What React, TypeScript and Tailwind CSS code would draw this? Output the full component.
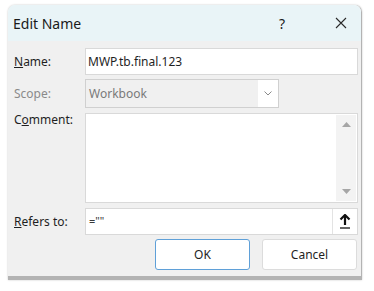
import React from "react";

const font = { fontFamily: '"Noto Sans", "Open Sans", sans-serif' };

const Row: React.FC<{ label: React.ReactNode; top?: boolean; muted?: boolean; children: React.ReactNode }> = ({
  label,
  top,
  muted,
  children,
}) => (
  <div className={`flex ${top ? "items-start" : "items-center"}`}>
    <div
      className={`w-[77px] shrink-0 pl-[6px] text-[12px] leading-[16px] ${top ? "-mt-[1px]" : ""} ${
        muted ? "text-[#8a8a8a]" : "text-[#1f1f1f]"
      }`}
    >
      {label}
    </div>
    {children}
  </div>
);

export default function App() {
  return (
    <div className="h-[291px] w-[374px] overflow-hidden bg-white pt-[5px] pl-[8px]" style={font}>
      <div className="w-[354px] rounded-t-[7px] border-b-[4px] border-r-[1px] border-[#b3b3b3] shadow-[0_0_2px_rgba(0,0,0,0.25)]">
        {/* title bar */}
        <div className="flex h-[36px] items-center rounded-t-[7px] bg-[#e9f4f7] pl-[5px] pr-[14px]">
          <span className="flex-1 text-[14px] text-[#1a1a1a]">Edit Name</span>
          <span className="mr-[50px] text-[14px] text-[#1a1a1a]">?</span>
          <svg width="12" height="12" viewBox="0 0 12 12" className="mb-[1px]">
            <path d="M1 1 L11 11 M11 1 L1 11" stroke="#2a2a2a" strokeWidth="1.1" fill="none" />
          </svg>
        </div>

        {/* body */}
        <div className="flex flex-col gap-[4px] bg-[#f0f0f0] pt-[7px] pr-[3px] pb-[6px]">
          <Row label={<><span className="underline">N</span>ame:</>}>
            <div className="flex h-[27px] w-[273px] items-center border border-[#d9d9d9] bg-white px-[2px] text-[12px] text-[#1f1f1f]">
              MWP.tb.final.123
            </div>
          </Row>

          <Row label="Scope:" muted>
            <div className="flex h-[29px] w-[194px] items-center border border-[#d0d0d0] bg-[#f0f0f0] pl-[3px] text-[12px] text-[#7a7a7a]">
              <span className="flex-1">Workbook</span>
              <div className="flex h-[27px] w-[20px] items-center justify-center bg-white">
                <svg width="8" height="5" viewBox="0 0 8 5">
                  <path d="M0.5 0.5 L4 4 L7.5 0.5" stroke="#8a8a8a" strokeWidth="1" fill="none" />
                </svg>
              </div>
            </div>
          </Row>

          <div className="mt-[1px]">
            <Row top label={<>C<span className="underline">o</span>mment:</>}>
              <div className="flex h-[90px] w-[273px] border border-[#d9d9d9] bg-white">
                <div className="flex-1" />
                <div className="my-[1px] mr-[1px] flex w-[20px] flex-col items-center justify-between bg-[#f3f3f3] py-[7px]">
                  <svg width="9" height="5" viewBox="0 0 9 5">
                    <path d="M0 5 L4.5 0 L9 5 Z" fill="#a6a6a6" />
                  </svg>
                  <svg width="9" height="5" viewBox="0 0 9 5">
                    <path d="M0 0 L4.5 5 L9 0 Z" fill="#a6a6a6" />
                  </svg>
                </div>
              </div>
            </Row>
          </div>

          <div className="mt-[1px]">
            <Row label={<><span className="underline">R</span>efers to:</>}>
              <div className="flex h-[27px] w-[273px] items-center border border-[#d9d9d9] bg-white pl-[3px] text-[11px] text-[#3a3a3a]">
                <span className="flex-1">=""</span>
                <div className="flex h-[25px] w-[25px] items-center justify-center border-l border-[#e3e3e3] bg-white">
                  <svg width="12" height="15" viewBox="0 0 12 15">
                    <path d="M6 1 L6 11" stroke="#111" strokeWidth="2.2" />
                    <path d="M1.5 5.5 L6 1 L10.5 5.5" stroke="#111" strokeWidth="2.2" fill="none" />
                    <path d="M1 14 L11 14" stroke="#111" strokeWidth="1.3" />
                  </svg>
                </div>
              </div>
            </Row>
          </div>

          <div className="flex justify-end gap-[12px] pr-[1px]">
            <button className="h-[31px] w-[95px] rounded-[3px] border border-[#5fa0d8] bg-white text-[12px] text-[#1f1f1f]">
              OK
            </button>
            <button className="h-[31px] w-[95px] rounded-[3px] border border-[#dcdcdc] bg-white text-[12px] text-[#1f1f1f]">
              Cancel
            </button>
          </div>
        </div>
      </div>
    </div>
  );
}
